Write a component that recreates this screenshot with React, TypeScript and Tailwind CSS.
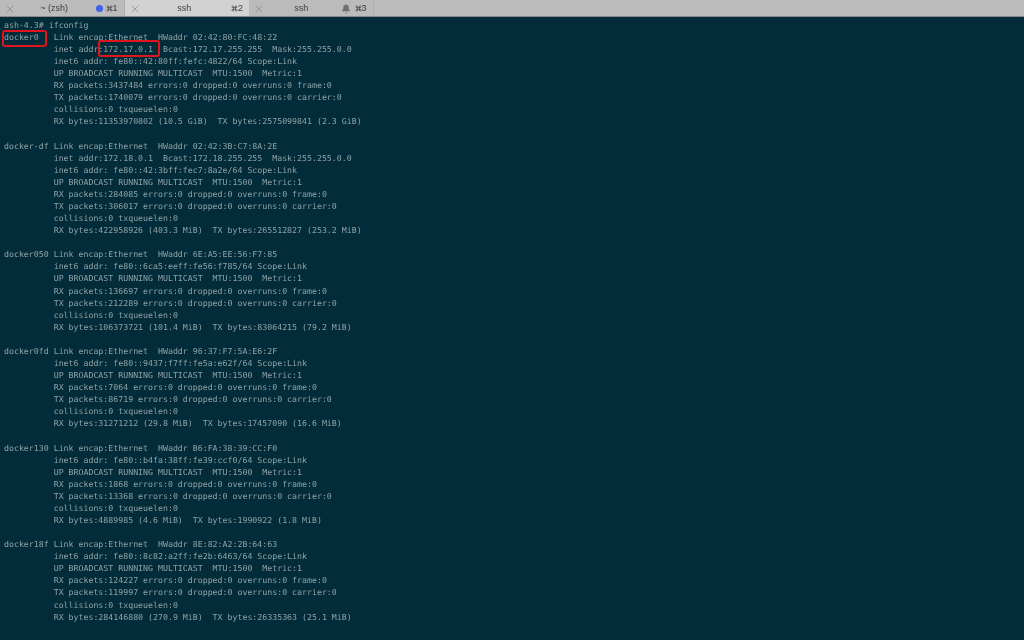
import { X, Command, Bell } from "lucide-react";

type Iface = { name: string; lines: string[] };

const ifaces: Iface[] = [
  {
    name: "docker0 ",
    lines: [
      "  Link encap:Ethernet  HWaddr 02:42:80:FC:48:22",
      "          inet addr:172.17.0.1  Bcast:172.17.255.255  Mask:255.255.0.0",
      "          inet6 addr: fe80::42:80ff:fefc:4822/64 Scope:Link",
      "          UP BROADCAST RUNNING MULTICAST  MTU:1500  Metric:1",
      "          RX packets:3437484 errors:0 dropped:0 overruns:0 frame:0",
      "          TX packets:1740079 errors:0 dropped:0 overruns:0 carrier:0",
      "          collisions:0 txqueuelen:0",
      "          RX bytes:11353970802 (10.5 GiB)  TX bytes:2575099841 (2.3 GiB)",
    ],
  },
  {
    name: "docker-df",
    lines: [
      " Link encap:Ethernet  HWaddr 02:42:3B:C7:8A:2E",
      "          inet addr:172.18.0.1  Bcast:172.18.255.255  Mask:255.255.0.0",
      "          inet6 addr: fe80::42:3bff:fec7:8a2e/64 Scope:Link",
      "          UP BROADCAST RUNNING MULTICAST  MTU:1500  Metric:1",
      "          RX packets:284085 errors:0 dropped:0 overruns:0 frame:0",
      "          TX packets:306017 errors:0 dropped:0 overruns:0 carrier:0",
      "          collisions:0 txqueuelen:0",
      "          RX bytes:422958926 (403.3 MiB)  TX bytes:265512827 (253.2 MiB)",
    ],
  },
  {
    name: "docker050",
    lines: [
      " Link encap:Ethernet  HWaddr 6E:A5:EE:56:F7:85",
      "          inet6 addr: fe80::6ca5:eeff:fe56:f785/64 Scope:Link",
      "          UP BROADCAST RUNNING MULTICAST  MTU:1500  Metric:1",
      "          RX packets:136697 errors:0 dropped:0 overruns:0 frame:0",
      "          TX packets:212289 errors:0 dropped:0 overruns:0 carrier:0",
      "          collisions:0 txqueuelen:0",
      "          RX bytes:106373721 (101.4 MiB)  TX bytes:83064215 (79.2 MiB)",
    ],
  },
  {
    name: "docker0fd",
    lines: [
      " Link encap:Ethernet  HWaddr 96:37:F7:5A:E6:2F",
      "          inet6 addr: fe80::9437:f7ff:fe5a:e62f/64 Scope:Link",
      "          UP BROADCAST RUNNING MULTICAST  MTU:1500  Metric:1",
      "          RX packets:7064 errors:0 dropped:0 overruns:0 frame:0",
      "          TX packets:86719 errors:0 dropped:0 overruns:0 carrier:0",
      "          collisions:0 txqueuelen:0",
      "          RX bytes:31271212 (29.8 MiB)  TX bytes:17457090 (16.6 MiB)",
    ],
  },
  {
    name: "docker130",
    lines: [
      " Link encap:Ethernet  HWaddr B6:FA:38:39:CC:F0",
      "          inet6 addr: fe80::b4fa:38ff:fe39:ccf0/64 Scope:Link",
      "          UP BROADCAST RUNNING MULTICAST  MTU:1500  Metric:1",
      "          RX packets:1868 errors:0 dropped:0 overruns:0 frame:0",
      "          TX packets:13368 errors:0 dropped:0 overruns:0 carrier:0",
      "          collisions:0 txqueuelen:0",
      "          RX bytes:4889985 (4.6 MiB)  TX bytes:1990922 (1.8 MiB)",
    ],
  },
  {
    name: "docker18f",
    lines: [
      " Link encap:Ethernet  HWaddr 8E:82:A2:2B:64:63",
      "          inet6 addr: fe80::8c82:a2ff:fe2b:6463/64 Scope:Link",
      "          UP BROADCAST RUNNING MULTICAST  MTU:1500  Metric:1",
      "          RX packets:124227 errors:0 dropped:0 overruns:0 frame:0",
      "          TX packets:119997 errors:0 dropped:0 overruns:0 carrier:0",
      "          collisions:0 txqueuelen:0",
      "          RX bytes:284146880 (270.9 MiB)  TX bytes:26335363 (25.1 MiB)",
    ],
  },
];

function Tab({
  title,
  num,
  active,
  badge,
}: {
  title: string;
  num: number;
  active?: boolean;
  badge?: React.ReactNode;
}) {
  return (
    <div
      className={`flex h-full w-[124.5px] items-center pt-[1px] pr-[7px] pl-[4px] ${
        active ? "bg-[#d2d2d2]" : "border-r border-[#adadad] bg-[#bbbbbb]"
      }`}
    >
      <X size={12} strokeWidth={1.4} className="shrink-0 text-[#858585]" />
      <span className="flex-1 pr-[3px] text-center text-[9px] text-[#3f3f3f]">{title}</span>
      {badge}
      <span className="flex w-[11px] items-center text-[9px] text-[#3f3f3f]">
        <Command size={7} strokeWidth={2.2} className="shrink-0" />
        {num}
      </span>
    </div>
  );
}

export default function App() {
  return (
    <div className="relative flex h-[640px] w-[1024px] flex-col overflow-hidden bg-[#022c3a]">
      <div className="flex h-[17px] shrink-0 border-b border-[#8a8a8a] bg-[#bbbbbb] font-['Liberation_Sans',sans-serif] blur-[0.3px]">
        <Tab
          title="~ (zsh)"
          num={1}
          badge={<span className="mr-[3px] h-[7px] w-[7px] rounded-full bg-[#3d63e8]" />}
        />
        <Tab title="ssh" num={2} active />
        <Tab
          title="ssh"
          num={3}
          badge={<Bell size={10} fill="#707070" strokeWidth={1} className="mr-[4px] text-[#707070]" />}
        />
      </div>
      <pre className="pt-[1.8px] pl-1 font-['DejaVu_Sans_Mono',monospace] text-[8.25px] leading-[12.08px] text-[#8fa2a5] blur-[0.35px] [text-rendering:geometricPrecision]">
        <div>ash-4.3# ifconfig</div>
        {ifaces.map((f, i) => (
          <div key={f.name} className={i < ifaces.length - 1 ? "pb-[12.08px]" : ""}>
            <div>
              {f.name}
              {f.lines[0]}
            </div>
            {f.lines.slice(1).map((l, j) => (
              <div key={j}>{l}</div>
            ))}
          </div>
        ))}
      </pre>
      {/* red annotation boxes */}
      <div className="absolute top-[30px] left-[2px] h-[17px] w-[45px] rounded-[3px] border-2 border-[#e0141c]" />
      <div className="absolute top-[40px] left-[98px] h-[17px] w-[62px] rounded-[3px] border-2 border-[#e0141c]" />
    </div>
  );
}
